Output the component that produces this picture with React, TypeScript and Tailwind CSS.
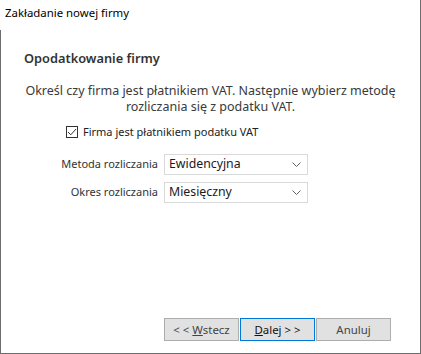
const font = { fontFamily: '"Noto Sans", "Open Sans", sans-serif' };

const Chevron = () => (
  <svg width="9" height="5" viewBox="0 0 9 5" className="shrink-0">
    <path d="M0.5 0.5 L4.5 4.5 L8.5 0.5" fill="none" stroke="#606060" strokeWidth="1" />
  </svg>
);

const Select = ({ value }: { value: string }) => (
  <div className="flex h-[21px] w-[144px] items-center justify-between border border-[#d9d9d9] bg-white pl-[4px] pr-[6px] text-[12.3px] leading-none text-[#1a1a1a]">
    <span>{value}</span>
    <Chevron />
  </div>
);

const Button = ({ children, primary }: { children: React.ReactNode; primary?: boolean }) => (
  <div
    className={
      'flex h-[23px] w-[75px] items-center justify-center border bg-[#e1e1e1] text-[11.4px] leading-none ' +
      (primary ? 'border-[#0078d7] text-[#111]' : 'border-[#adadad] text-[#444]')
    }
  >
    <span className="whitespace-pre">{children}</span>
  </div>
);

export default function App() {
  return (
    <div style={font} className="flex h-[354px] w-[421px] flex-col bg-white">
      <div className="h-[30px] border-r border-[#6d6d6d] px-[5px] pt-[5px] text-[11.4px] leading-[16px] text-black">
        Zakładanie nowej firmy
      </div>
      <div className="flex flex-1 flex-col border-x border-b border-[#6d6d6d]">
        <h1 className="mt-[19px] pl-[23px] text-[12.8px] font-semibold leading-[18px] text-[#333]">
          Opodatkowanie firmy
        </h1>
        <p className="mt-[16px] px-[20px] text-center text-[12.5px] leading-[16px] text-[#3a3a3a]">
          Określ czy firma jest płatnikiem VAT. Następnie wybierz metodę rozliczania się z podatku VAT.
        </p>
        <label className="mt-[9px] flex items-center gap-[5px] pl-[65px] text-[11px] leading-[16px] text-[#222]">
          <span className="flex h-[12px] w-[12px] items-center justify-center border border-[#333] bg-white">
            <svg width="10" height="8" viewBox="0 0 10 8">
              <path d="M1 4 L3.8 6.8 L9 1" fill="none" stroke="#333" strokeWidth="1" />
            </svg>
          </span>
          Firma jest płatnikiem podatku VAT
        </label>
        <div className="mt-[14px] flex flex-col gap-[7px] text-[11px] text-[#333]">
          <div className="flex items-center gap-[6px]">
            <span className="w-[157px] text-right">Metoda rozliczania</span>
            <Select value="Ewidencyjna" />
          </div>
          <div className="flex items-center gap-[6px]">
            <span className="w-[157px] text-right">Okres rozliczania</span>
            <Select value="Miesięczny" />
          </div>
        </div>
        <div className="mt-auto mb-[12px] flex justify-end gap-[1px] pr-[29px]">
          <Button>
            {'< < '}<span className="underline">W</span>stecz
          </Button>
          <Button primary>
            <span className="underline">D</span>alej {'> >'}
          </Button>
          <Button>Anuluj</Button>
        </div>
      </div>
    </div>
  );
}
